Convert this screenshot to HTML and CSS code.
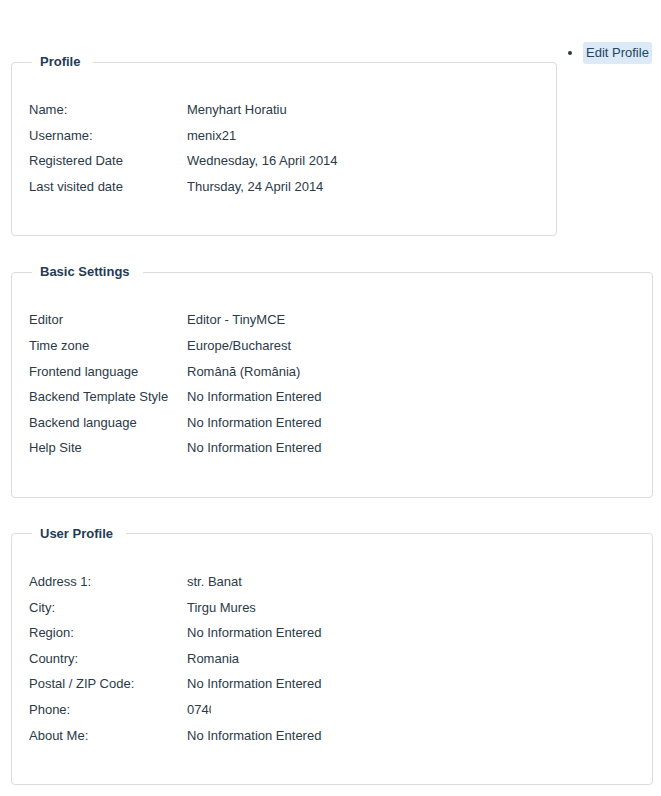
FILE: index.html
```html
<!DOCTYPE html>
<html lang="en">
<head>
    <meta charset="UTF-8">
    <meta name="viewport" content="width=device-width, initial-scale=1.0">
    <title>Profile</title>
    <link rel="stylesheet" href="styles.css">
</head>
<body>
    <div class="page">
        <div class="top">
            <fieldset class="box box-profile">
                <legend>Profile</legend>
                <dl class="details">
                    <dt>Name:</dt><dd>Menyhart Horatiu</dd>
                    <dt>Username:</dt><dd>menix21</dd>
                    <dt>Registered Date</dt><dd>Wednesday, 16 April 2014</dd>
                    <dt>Last visited date</dt><dd>Thursday, 24 April 2014</dd>
                </dl>
            </fieldset>
            <ul class="actions">
                <li><a href="#">Edit Profile</a></li>
            </ul>
        </div>

        <fieldset class="box">
            <legend>Basic Settings</legend>
            <dl class="details">
                <dt>Editor</dt><dd>Editor - TinyMCE</dd>
                <dt>Time zone</dt><dd>Europe/Bucharest</dd>
                <dt>Frontend language</dt><dd>Română (România)</dd>
                <dt>Backend Template Style</dt><dd>No Information Entered</dd>
                <dt>Backend language</dt><dd>No Information Entered</dd>
                <dt>Help Site</dt><dd>No Information Entered</dd>
            </dl>
        </fieldset>

        <fieldset class="box">
            <legend>User Profile</legend>
            <dl class="details">
                <dt>Address 1:</dt><dd>str. Banat</dd>
                <dt>City:</dt><dd>Tirgu Mures</dd>
                <dt>Region:</dt><dd>No Information Entered</dd>
                <dt>Country:</dt><dd>Romania</dd>
                <dt>Postal / ZIP Code:</dt><dd>No Information Entered</dd>
                <dt>Phone:</dt><dd><span class="cut">0740</span></dd>
                <dt>About Me:</dt><dd>No Information Entered</dd>
            </dl>
        </fieldset>
    </div>
</body>
</html>
```

FILE: styles.css
```css
body {
    margin: 0;
    font-family: "Liberation Sans", Arial, Helvetica, sans-serif;
    font-size: 13px;
    color: #2b3a48;
    background-color: #ffffff;
}
.page {
    padding: 42px 8px 0 11px;
}
.top {
    display: flex;
    align-items: flex-start;
}
.box {
    margin: 0 0 27px 0;
    padding: 26px 17px 36px 17px;
    border: 1px solid #dcdcdc;
    border-radius: 4px;
}
.box-profile {
    width: 546px;
    box-sizing: border-box;
    margin-top: 11px;
}
legend {
    margin-left: 3px;
    padding: 0 13px 0 8px;
    font-weight: bold;
    line-height: 18px;
    color: #1f3b55;
}
.details {
    display: grid;
    grid-template-columns: 158px 1fr;
    margin: 0;
    line-height: 25.6px;
}
.details dt,
.details dd {
    margin: 0;
}
.cut {
    display: inline-block;
    width: 24px;
    overflow: hidden;
    vertical-align: top;
}
.actions {
    margin: 0;
    padding: 0 0 0 26px;
}
.actions li {
    line-height: 22px;
}
.actions a {
    display: inline-block;
    padding: 0 3px;
    background-color: #dbeaf6;
    border-radius: 3px;
    color: #1e4466;
    text-decoration: none;
}
```
